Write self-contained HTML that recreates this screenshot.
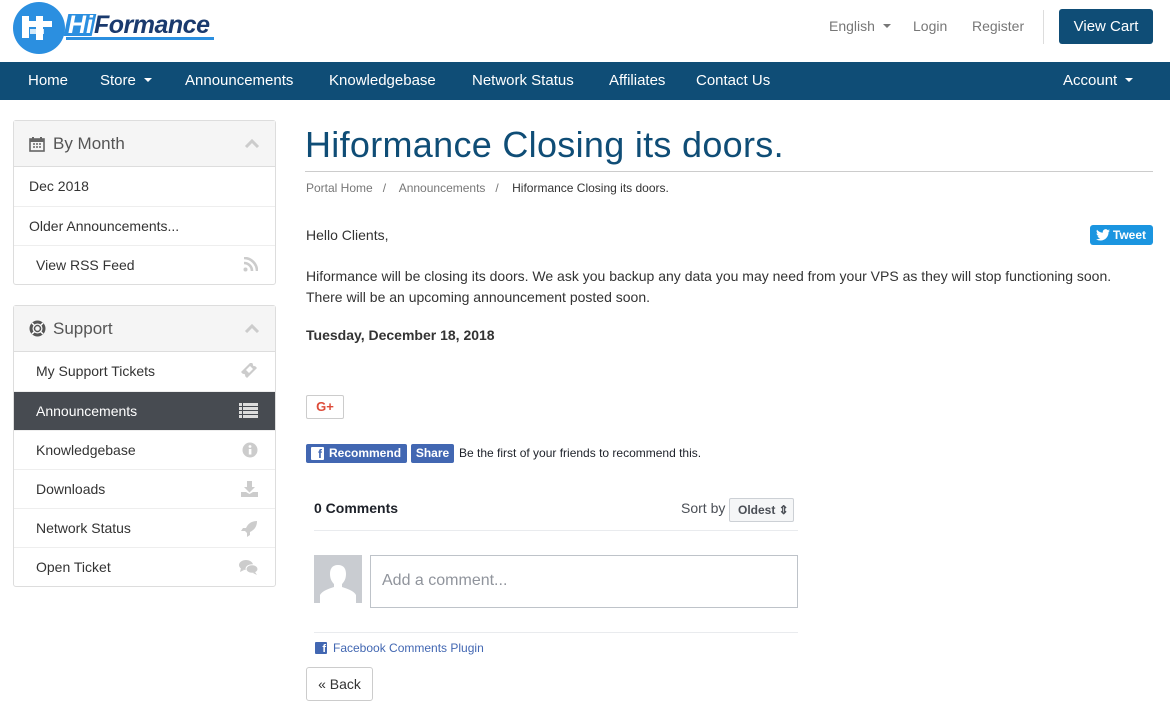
<!DOCTYPE html>
<html><head><meta charset="utf-8"><style>
*{box-sizing:border-box;margin:0;padding:0}
body{width:1170px;height:723px;overflow:hidden;background:#fff;font-family:"Liberation Sans",sans-serif;color:#333;font-size:14px;position:relative}
.a{position:absolute}
.top a{position:absolute;color:#777;font-size:14px;top:18px}
.nav{position:absolute;top:62px;left:0;width:1170px;height:38px;background:#0f4d76}
.nav span{position:absolute;top:10px;color:#fff;font-size:15px}
.car{display:inline-block;border-left:4px solid transparent;border-right:4px solid transparent;border-top:4px solid currentColor;vertical-align:3px;margin-left:8px}
.nav span .car{position:static}
.panel{position:absolute;left:13px;width:263px;border:1px solid #ddd;border-radius:3px;background:#fff}
.ph{height:46px;background:#f5f5f5;border-bottom:1px solid #ddd;color:#555;font-size:17px;padding:13px 15px 0 39px;position:relative}
.row{height:39px;border-top:1px solid #eee;padding:11px 15px 0;font-size:14px;color:#333;position:relative}
.ph+.row{border-top:none}
.row svg{position:absolute;right:17px;top:11px}
.act{background:#474b51;color:#fff}
.ph svg.ch{position:absolute;right:15px;top:17px}
</style></head><body>
<div class="a" style="left:13px;top:2px;width:52px;height:52px;border-radius:50%;background:#2b8fe0"></div>
<svg class="a" style="left:20px;top:12px" width="38" height="32" viewBox="0 0 38 32"><g fill="#fff"><rect x="2" y="4" width="7" height="22"/><rect x="2" y="9" width="30" height="6"/><rect x="16" y="4" width="7" height="24"/><rect x="10" y="17" width="14" height="5" opacity=".8"/></g></svg>
<div class="a" style="left:66px;top:14px;width:28px;height:22px;background:#2b8fe0;transform:skewX(-12deg)"></div>
<div class="a" style="left:68px;top:11px;font:italic bold 25px 'Liberation Sans',sans-serif;color:#fff">Hi</div>
<div class="a" style="left:94px;top:11px;font:italic bold 25px 'Liberation Sans',sans-serif;color:#1a3a6e;letter-spacing:-0.5px">Formance</div>
<div class="a" style="left:66px;top:37px;width:148px;height:3px;background:#2b8fe0"></div>
<div class="top"><a style="left:829px">English<span class="car"></span></a><a style="left:913px">Login</a><a style="left:972px">Register</a></div>
<div class="a" style="left:1043px;top:10px;width:1px;height:34px;background:#ddd"></div>
<div class="a" style="left:1059px;top:9px;width:94px;height:35px;background:#0f4d76;border-radius:3px;color:#fff;font-size:15px;text-align:center;line-height:35px">View Cart</div>
<div class="nav"><span style="left:28px">Home</span><span style="left:100px">Store<span class="car"></span></span><span style="left:185px">Announcements</span><span style="left:329px">Knowledgebase</span><span style="left:472px">Network Status</span><span style="left:609px">Affiliates</span><span style="left:696px">Contact Us</span><span style="left:1063px">Account<span class="car"></span></span></div>

<div class="panel" style="top:120px"><div class="ph"><svg class="a" style="left:15px;top:15px" width="16" height="16" viewBox="0 0 16 16"><rect x="1" y="3" width="14" height="12" fill="none" stroke="#666" stroke-width="1.6"/><rect x="1" y="3" width="14" height="3" fill="#666"/><path d="M4 1v3M12 1v3" stroke="#666" stroke-width="2"/><path d="M4 8h2M7 8h2M10 8h2M4 11h2M7 11h2M10 11h2" stroke="#666" stroke-width="1.5"/></svg>By Month<svg class="ch" width="16" height="10"><path d="M2 9l6-6 6 6" fill="none" stroke="#ccc" stroke-width="3"/></svg></div>
<div class="row">Dec 2018</div><div class="row">Older Announcements...</div><div class="row" style="padding-left:22px">View RSS Feed<svg width="15" height="15" viewBox="0 0 15 15"><circle cx="2.5" cy="12.5" r="2" fill="#ccc"/><path d="M1 6a8 8 0 0 1 8 8M1 1a13 13 0 0 1 13 13" fill="none" stroke="#ccc" stroke-width="2.6"/></svg></div></div>

<div class="panel" style="top:305px"><div class="ph"><svg class="a" style="left:15px;top:14px" width="17" height="17" viewBox="0 0 17 17"><circle cx="8.5" cy="8.5" r="6.5" fill="none" stroke="#555" stroke-width="3"/><circle cx="8.5" cy="8.5" r="3" fill="none" stroke="#555" stroke-width="1.5"/><path d="M3 3l3 3M14 3l-3 3M3 14l3-3M14 14l-3-3" stroke="#fff" stroke-width="1.5"/></svg>Support<svg class="ch" width="16" height="10"><path d="M2 9l6-6 6 6" fill="none" stroke="#ccc" stroke-width="3"/></svg></div>
<div class="row" style="padding-left:22px">My Support Tickets<svg width="18" height="16" viewBox="0 0 18 16"><path d="M1 11l10-10 2 2a1.5 1.5 0 0 0 2 2l2 2-10 10-2-2a1.5 1.5 0 0 0-2-2z" fill="#ccc" transform="translate(0,-2)"/><path d="M6 8l4-4 3 3-4 4z" fill="#fff" transform="translate(0,-1)"/></svg></div>
<div class="row act" style="padding-left:22px">Announcements<svg width="19" height="15" viewBox="0 0 19 15"><g fill="#ddd"><rect x="0" y="0" width="3" height="3"/><rect x="4" y="0" width="15" height="3"/><rect x="0" y="4" width="3" height="3"/><rect x="4" y="4" width="15" height="3"/><rect x="0" y="8" width="3" height="3"/><rect x="4" y="8" width="15" height="3"/><rect x="0" y="12" width="3" height="3"/><rect x="4" y="12" width="15" height="3"/></g></svg></div>
<div class="row" style="padding-left:22px">Knowledgebase<svg width="16" height="16" viewBox="0 0 16 16"><circle cx="8" cy="8" r="7.5" fill="#ccc"/><rect x="6.8" y="7" width="2.6" height="5.5" fill="#fff"/><circle cx="8" cy="4.5" r="1.4" fill="#fff"/></svg></div>
<div class="row" style="padding-left:22px">Downloads<svg width="17" height="16" viewBox="0 0 17 16"><path d="M6 0h5v6h3l-5.5 5.5L3 6h3z" fill="#ccc"/><path d="M0 11h5l3.5 2 3.5-2h5v5H0z" fill="#ccc"/></svg></div>
<div class="row" style="padding-left:22px">Network Status<svg width="17" height="17" viewBox="0 0 17 17"><path d="M16 1c-6 0-9 3-11 7l-3 0-2 3 4 0 2 2 0 4 3-2 0-3c4-2 7-5 7-11z" fill="#ccc"/></svg></div>
<div class="row" style="padding-left:22px">Open Ticket<svg width="19" height="16" viewBox="0 0 19 16"><ellipse cx="7" cy="6" rx="7" ry="5" fill="#ccc"/><path d="M2 9l-1 4 4-2z" fill="#ccc"/><ellipse cx="13" cy="10" rx="6" ry="4.3" fill="#ccc" stroke="#fff" stroke-width="1"/><path d="M16 13l2 3-4-2z" fill="#ccc"/></svg></div></div>

<div class="a" style="left:305px;top:124px;font-size:36px;color:#0f4d76;letter-spacing:0.3px">Hiformance Closing its doors.</div>
<div class="a" style="left:305px;top:171px;width:848px;height:1px;background:#ccc"></div>
<div class="a" style="left:306px;top:181px;font-size:12px;color:#777">Portal Home &nbsp;&nbsp;/&nbsp;&nbsp;&nbsp; Announcements &nbsp;&nbsp;/&nbsp;&nbsp;&nbsp; <span style="color:#333">Hiformance Closing its doors.</span></div>
<div class="a" style="left:306px;top:227px">Hello Clients,</div>
<div class="a" style="left:1090px;top:225px;width:63px;height:20px;background:#1b95e0;border-radius:3px;color:#fff;font-size:12px;font-weight:bold;line-height:20px;text-align:right;padding-right:7px">Tweet</div>
<svg class="a" style="left:1096px;top:229px" width="14" height="12" viewBox="0 0 24 20"><path d="M24 2.4a10 10 0 0 1-2.8.8A5 5 0 0 0 23.3.4a10 10 0 0 1-3.1 1.2A4.9 4.9 0 0 0 11.8 6 14 14 0 0 1 1.7.9a4.9 4.9 0 0 0 1.5 6.6 4.9 4.9 0 0 1-2.2-.6 4.9 4.9 0 0 0 3.9 4.9 4.9 4.9 0 0 1-2.2.1 4.9 4.9 0 0 0 4.6 3.4A9.9 9.9 0 0 1 0 17.3 14 14 0 0 0 7.5 19.5c9 0 14-7.5 14-14v-.6A10 10 0 0 0 24 2.4z" fill="#fff"/></svg>
<div class="a" style="left:306px;top:266px;line-height:21px">Hiformance will be closing its doors. We ask you backup any data you may need from your VPS as they will stop functioning soon.<br>There will be an upcoming announcement posted soon.</div>
<div class="a" style="left:306px;top:327px;font-weight:bold">Tuesday, December 18, 2018</div>
<div class="a" style="left:306px;top:395px;width:38px;height:24px;border:1px solid #ccc;border-radius:2px;color:#dd4b39;font-weight:bold;font-size:13px;text-align:center;line-height:22px">G+</div>
<div class="a" style="left:306px;top:444px;width:101px;height:19px;background:#4267b2;border-radius:2px;color:#fff;font-size:12px;font-weight:bold;line-height:19px;padding-left:23px">Recommend</div>
<div class="a" style="left:311px;top:447px;width:13px;height:13px;background:#fff;border-radius:1px;color:#4267b2;font-weight:bold;font-size:12px;line-height:15px;text-align:right;padding-right:2px;overflow:hidden">f</div>
<div class="a" style="left:411px;top:444px;width:43px;height:19px;background:#4267b2;border-radius:2px;color:#fff;font-size:12px;font-weight:bold;line-height:19px;text-align:center">Share</div>
<div class="a" style="left:459px;top:446px;font-size:12px;color:#1d2129">Be the first of your friends to recommend this.</div>
<div class="a" style="left:314px;top:500px;font-weight:bold;color:#1d2129">0 Comments</div>
<div class="a" style="left:681px;top:500px;color:#4b4f56">Sort by</div>
<div class="a" style="left:729px;top:498px;width:65px;height:24px;background:#f5f6f7;border:1px solid #ccd0d5;border-radius:2px;font-size:12px;font-weight:bold;color:#4b4f56;line-height:22px;padding-left:8px">Oldest ⇕</div>
<div class="a" style="left:314px;top:530px;width:484px;height:1px;background:#e9ebee"></div>
<svg class="a" style="left:314px;top:555px" width="48" height="48" viewBox="0 0 48 48"><rect width="48" height="48" fill="#c9ccd1"/><path d="M24 10c-6 0-8 4-8 9s2 8 4 10v3c-6 2-12 4-14 8v8h36v-8c-2-4-8-6-14-8v-3c2-2 4-5 4-10s-2-9-8-9z" fill="#fff"/></svg>
<div class="a" style="left:370px;top:555px;width:428px;height:53px;border:1px solid #bec3c9;color:#90949c;font-size:16px;padding:16px 11px">Add a comment...</div>
<div class="a" style="left:314px;top:632px;width:484px;height:1px;background:#e9ebee"></div>
<div class="a" style="left:315px;top:642px;width:12px;height:12px;background:#4267b2;border-radius:1px;color:#fff;font-weight:bold;font-size:11px;line-height:14px;text-align:right;padding-right:1px;overflow:hidden">f</div>
<div class="a" style="left:333px;top:641px;font-size:12px;color:#4267b2">Facebook Comments Plugin</div>
<div class="a" style="left:306px;top:667px;width:67px;height:34px;border:1px solid #ccc;border-radius:3px;text-align:center;line-height:32px">« Back</div>
</body></html>
